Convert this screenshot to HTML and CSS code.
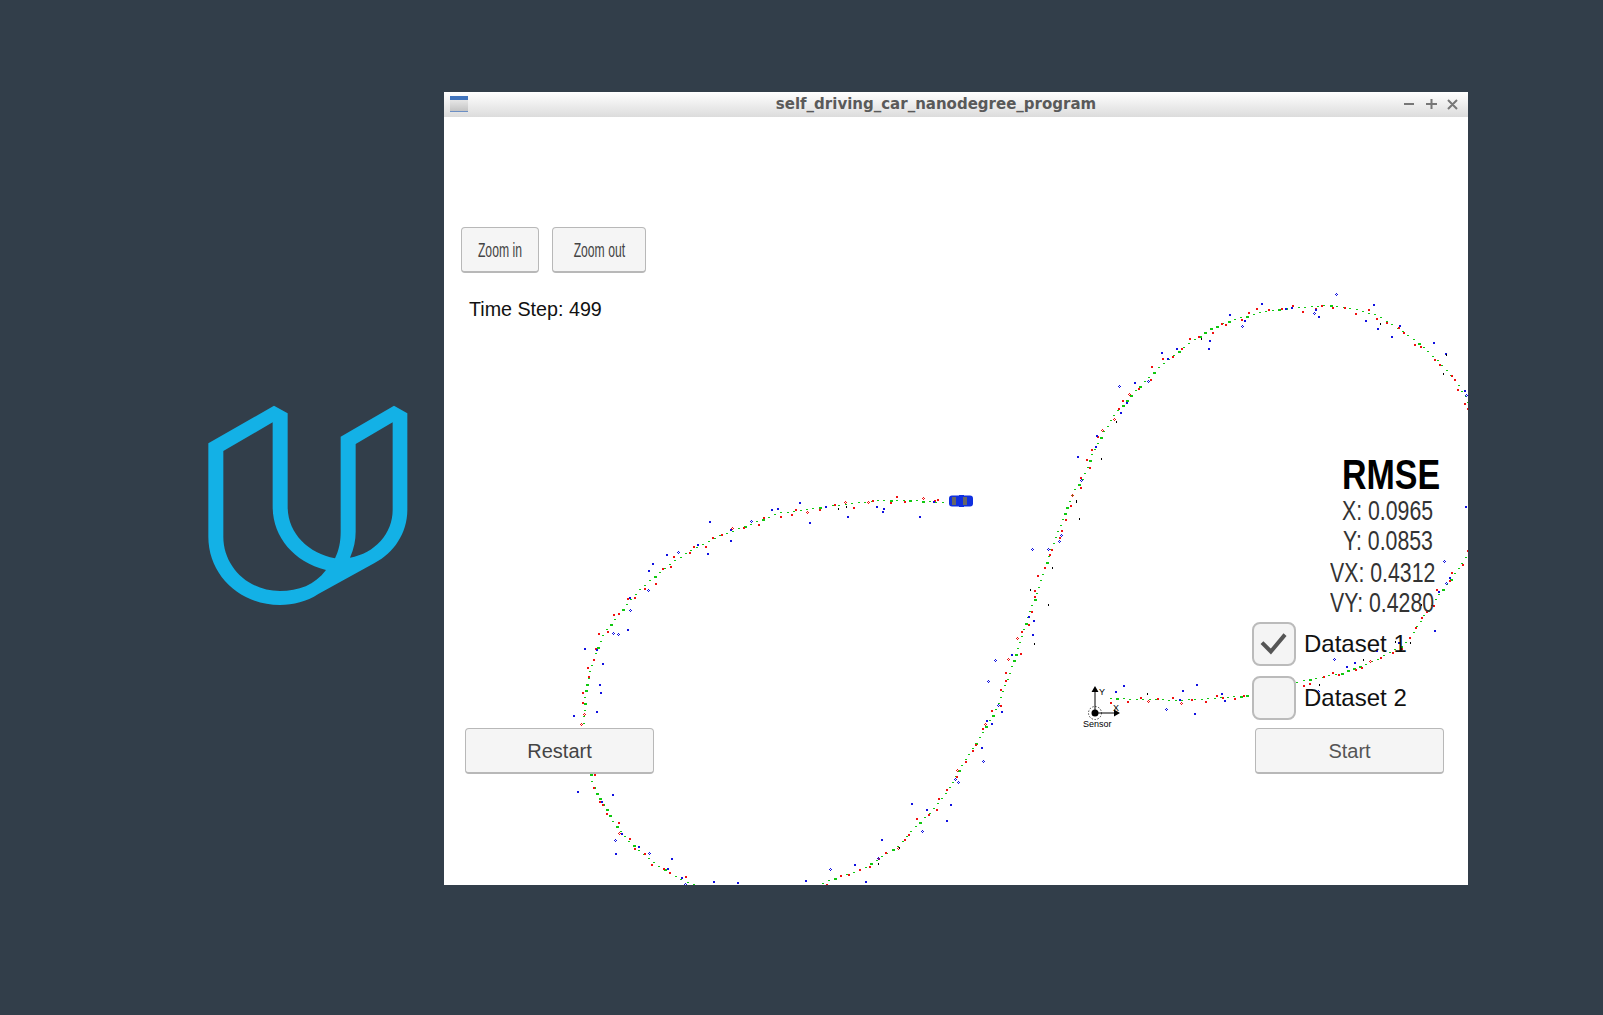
FILE: index.html
```html
<!DOCTYPE html>
<html lang="en">

<head>
    <meta charset="UTF-8">
    <title>self_driving_car_nanodegree_program</title>
    <link rel="stylesheet" href="styles.css">
</head>

<body>
    <svg class="logo" viewBox="0 0 720 690" aria-hidden="true">
        <path fill-rule="evenodd" d="M55 160 L252 47 L293 70 V350 C293 430 355 490 435 505 C447 480 452 455 452 425 V140 L612 47 L652 70 V360 C652 430 610 490 555 518 L385 612 C350 635 310 645 270 645 C150 645 55 555 55 440 Z
            M100 183 L248 97 V350 C248 440 310 515 408 540 C375 585 325 603 270 603 C175 603 100 530 100 440 Z
            M497 162 L608 97 V360 C608 430 555 490 480 503 C492 475 497 450 497 425 Z" />
    </svg>

    <div class="window">
        <div class="titlebar">
            <div class="app-icon"></div>
            <div class="title">self_driving_car_nanodegree_program</div>
            <svg class="controls" viewBox="0 0 64 12" aria-hidden="true">
                <path d="M0 6 H10 M22 6 H33 M27.500 1 V11 M44 2 L53 11 M53 2 L44 11" />
            </svg>
        </div>

        <div class="canvas">
            <svg id="track" class="track" viewBox="444 117 1024 768" aria-hidden="true">
                <g id="dots"></g>
                <g class="sensor">
                    <circle class="sensor-ring" cx="1095" cy="713" r="6.500" />
                    <circle cx="1095" cy="713" r="3.500" />
                    <path class="axis" d="M1095 713 V690 M1095 713 H1116" />
                    <path d="M1095 686 L1091.500 692 H1098.500 Z M1120 713 L1114 709.500 V716.500 Z" />
                    <text x="1099" y="695">Y</text>
                    <text x="1113" y="711">X</text>
                    <text x="1083" y="727">Sensor</text>
                </g>
                <g class="car">
                    <rect x="949" y="495.500" width="24" height="11" rx="3" />
                    <rect x="959" y="495" width="5" height="12" />
                    <rect class="wheel" x="952" y="497" width="4" height="8" />
                    <rect class="wheel" x="963" y="497" width="4" height="8" />
                </g>
            </svg>

            <div class="left-col">
                <div class="zoom-row">
                    <button class="btn btn-zoom-in"><span class="squeeze">Zoom in</span></button>
                    <button class="btn btn-zoom-out"><span class="squeeze">Zoom out</span></button>
                </div>
                <p class="time-step">Time Step: 499</p>
                <button class="btn btn-wide btn-restart">Restart</button>
            </div>

            <div class="right-col">
                <p class="rmse-title">RMSE</p>
                <p class="stat stat-x">X: 0.0965</p>
                <p class="stat stat-y">Y: 0.0853</p>
                <p class="stat stat-vx">VX: 0.4312</p>
                <p class="stat stat-vy">VY: 0.4280</p>

                <div class="dataset">
                    <div class="checkbox">
                        <svg viewBox="0 0 44 44" aria-hidden="true">
                            <path d="M9 21 L19 31 L35 12" />
                        </svg>
                    </div>
                    <span>Dataset 1</span>
                </div>
                <div class="dataset dataset-second">
                    <div class="checkbox"></div>
                    <span>Dataset 2</span>
                </div>
                <button class="btn btn-wide btn-start">Start</button>
            </div>
        </div>
    </div>

    <script src="script.js"></script>
</body>

</html>
```

FILE: styles.css
```css
html,
body {
    height: 100%;
}

body {
    margin: 0;
    padding: 92px 0 0 190px;
    box-sizing: border-box;
    display: flex;
    align-items: flex-start;
    background-color: #323e4a;
    overflow: hidden;
    font-family: "Liberation Sans", Arial, sans-serif;
}

p {
    margin: 0;
}

.logo {
    width: 240px;
    height: 230px;
    margin: 298px 14px 0 0;
    flex: none;
}

.logo path {
    fill: #13b1e6;
}

.window {
    width: 1024px;
    flex: none;
}

.titlebar {
    height: 25px;
    box-sizing: border-box;
    display: flex;
    align-items: center;
    padding: 0 0 2px 6px;
    background: linear-gradient(#ffffff, #dcdcdc);
}

.app-icon {
    width: 18px;
    height: 16px;
    flex: none;
    box-sizing: border-box;
    border-top: 4px solid #4174bd;
    border-bottom: 1px solid #6c8fc4;
    background: linear-gradient(#e6e6e6, #c4c4c4);
}

.title {
    flex: 1;
    text-align: center;
    font-family: "DejaVu Sans", sans-serif;
    font-weight: bold;
    font-size: 15px;
    color: #5a5a5a;
}

.controls {
    width: 64px;
    height: 12px;
    flex: none;
}

.controls path {
    fill: none;
    stroke: #777;
    stroke-width: 2;
}

.canvas {
    height: 768px;
    position: relative;
    display: flex;
    justify-content: space-between;
    box-sizing: border-box;
    padding: 110px 24px 111px 17px;
    background-color: #fff;
    overflow: hidden;
}

.track {
    position: absolute;
    top: 0;
    left: 0;
    width: 1024px;
    height: 768px;
}

.left-col,
.right-col {
    position: relative;
    display: flex;
    flex-direction: column;
    align-items: flex-start;
}

.right-col {
    width: 192px;
    padding-top: 227px;
}

.zoom-row {
    display: flex;
    gap: 13px;
}

.btn {
    box-sizing: border-box;
    padding: 1px 0 0;
    background-color: #f5f5f5;
    border: 1.500px solid #b8b8b8;
    border-bottom-width: 2.500px;
    border-radius: 4px;
    font-family: inherit;
    color: #444;
}

.btn-zoom-in {
    width: 78px;
    height: 46px;
}

.btn-zoom-out {
    width: 94px;
    height: 46px;
}

.squeeze {
    display: inline-block;
    font-size: 21px;
    transform: scaleX(0.58);
    white-space: nowrap;
    margin: 0 -20px;
}

.time-step {
    margin: 25px 0 0 8px;
    font-size: 19.700px;
    color: #111;
}

.btn-wide {
    width: 189px;
    height: 46px;
    font-size: 20px;
}

.btn-restart {
    margin: auto 0 0 4px;
}

.btn-start {
    margin: 8px 0 0 3px;
    color: #555;
}

.rmse-title,
.stat {
    transform-origin: left center;
    white-space: nowrap;
}

.rmse-title {
    margin-left: 90px;
    font-size: 43px;
    line-height: 40px;
    font-weight: bold;
    color: #000;
    transform: scaleX(0.79);
}

.stat {
    font-size: 28px;
    line-height: 30px;
    color: #333;
    transform: scaleX(0.76);
}

.stat-x {
    margin: 2px 0 0 90px;
}

.stat-y {
    margin-left: 91px;
}

.stat-vx {
    margin: 2px 0 0 78px;
}

.stat-vy {
    margin-left: 78px;
}

.dataset {
    display: flex;
    align-items: center;
    gap: 8px;
    margin-top: 4px;
    font-size: 24px;
    color: #111;
}

.dataset-second {
    margin-top: 10px;
}

.checkbox {
    width: 44px;
    height: 44px;
    box-sizing: border-box;
    background-color: #f4f4f4;
    border: 2.500px solid #bbb;
    border-radius: 8px;
}

.checkbox svg {
    display: block;
    width: 39px;
    height: 39px;
}

.checkbox path {
    fill: none;
    stroke: #555;
    stroke-width: 4.500;
}

.sensor {
    font-family: "Liberation Sans", Arial, sans-serif;
    font-size: 9px;
}

.sensor-ring {
    fill: none;
    stroke: #000;
    stroke-width: 0.700;
    stroke-dasharray: 1.500 1.500;
}

.axis {
    fill: none;
    stroke: #000;
    stroke-width: 1;
}

.car rect {
    fill: #1030e0;
}

.car .wheel {
    fill: #666;
}
```

FILE: script.js
```js
// trajectory read off the screenshot, in page coordinates
const route = [
    [1110, 698], [1180, 700], [1252, 695], [1295, 682], [1340, 673], [1375, 660], [1405, 643],
    [1428, 608], [1447, 583], [1467, 555], [1490, 480], [1465, 397], [1453, 378], [1437, 360],
    [1417, 342], [1400, 330], [1377, 315], [1350, 308], [1327, 305], [1303, 307], [1283, 308],
    [1260, 312], [1233, 319], [1210, 328], [1190, 342], [1177, 352], [1157, 368], [1140, 385],
    [1127, 398], [1113, 415], [1100, 437], [1090, 457], [1083, 477], [1073, 490], [1065, 510],
    [1058, 530], [1050, 550], [1045, 565], [1039, 585], [1032, 603], [1020, 640], [1008, 675],
    [995, 710], [977, 740], [963, 762], [947, 790], [930, 812], [913, 828], [898, 845],
    [883, 855], [863, 868], [843, 875], [815, 885], [760, 905], [693, 884], [677, 878],
    [657, 865], [642, 853], [627, 840], [613, 823], [605, 808], [595, 792], [590, 777],
    [583, 723], [584, 700], [587, 680], [593, 657], [603, 633], [623, 607], [643, 585],
    [667, 565], [693, 548], [720, 535], [747, 525], [777, 513], [810, 508], [843, 504],
    [877, 500], [910, 500], [943, 502]
];

const NS = 'http://www.w3.org/2000/svg';
const dots = document.getElementById('dots');

// small seeded generator so the noise is the same on every load
let seed = 4242;
function rnd() {
    seed = (seed * 1664525 + 1013904223) % 4294967296;
    return seed / 4294967296;
}

function dot(x, y, w, h, color) {
    const r = document.createElementNS(NS, 'rect');
    r.setAttribute('x', Math.round(x));
    r.setAttribute('y', Math.round(y));
    r.setAttribute('width', w);
    r.setAttribute('height', h);
    r.setAttribute('fill', color);
    dots.appendChild(r);
}

// hollow marker, the measurement plot uses these now and then
function diamond(x, y, color) {
    dot(x - 1, y, 1, 1, color);
    dot(x + 1, y, 1, 1, color);
    dot(x, y - 1, 1, 1, color);
    dot(x, y + 1, 1, 1, color);
}

const line = document.createElementNS(NS, 'path');
line.setAttribute('d', 'M' + route.map((p) => p.join(' ')).join(' L'));
const total = line.getTotalLength();

for (let s = 0; s < total; s += 6.5) {
    const p = line.getPointAtLength(s);
    const big = rnd() < 0.25;
    dot(p.x, p.y, big ? 3 : 2, big ? 2 : 1, '#10c810');
}

for (let s = 4; s < total; s += 11) {
    const p = line.getPointAtLength(s);
    const x = p.x + (rnd() - 0.5) * 9;
    const y = p.y + (rnd() - 0.5) * 9;
    if (rnd() < 0.15) {
        diamond(x, y, '#f01010');
    } else {
        dot(x, y, 2, 2, '#f01010');
    }
}

for (let s = 8; s < total; s += 13) {
    const p = line.getPointAtLength(s);
    const x = p.x + (rnd() - 0.5) * 32;
    const y = p.y + (rnd() - 0.5) * 32;
    const roll = rnd();
    if (roll < 0.2) {
        diamond(x, y, '#1010e0');
    } else if (roll < 0.3) {
        dot(x, y, 1, 2, '#000');
    } else {
        dot(x, y, 2, 2, '#1010e0');
    }
}
```
